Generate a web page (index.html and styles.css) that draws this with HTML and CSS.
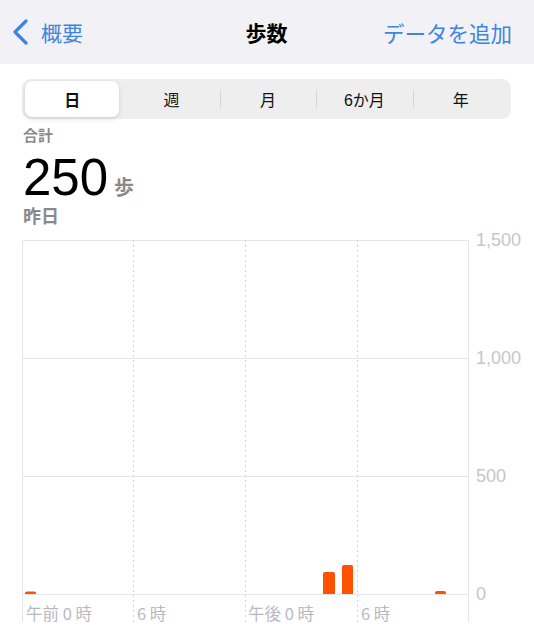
FILE: index.html
```
<!DOCTYPE html>
<html lang="ja">
<head>
    <meta charset="UTF-8">
    <title>歩数</title>
    <link rel="stylesheet" href="styles.css">
</head>
<body>
    <!-- ナビゲーションバー -->
    <div class="nav">
        <div class="nav-left">
            <svg class="chevron" width="18" height="26" viewBox="0 0 18 26">
                <polyline points="14,2 3,13 14,24" fill="none" stroke="#3c85e0" stroke-width="3.2" stroke-linecap="round" stroke-linejoin="round" />
            </svg>
            <span class="nav-link">概要</span>
        </div>
        <div class="nav-title">歩数</div>
        <div class="nav-right"><span class="nav-link">データを追加</span></div>
    </div>

    <!-- 期間の切り替え -->
    <div class="seg">
        <div class="seg-item current">日</div>
        <div class="seg-item">週</div>
        <div class="seg-item line">月</div>
        <div class="seg-item line">6か月</div>
        <div class="seg-item line">年</div>
    </div>

    <div class="summary">
        <div class="label">合計</div>
        <div class="total"><span class="num">250</span><span class="unit">歩</span></div>
        <div class="day">昨日</div>
    </div>

    <!-- グラフ -->
    <svg class="chart" width="534" height="410" viewBox="0 0 534 410">
        <g stroke="#e6e6ea" stroke-width="1">
            <line x1="22" y1="10.5" x2="468" y2="10.5" />
            <line x1="22" y1="128.5" x2="468" y2="128.5" />
            <line x1="22" y1="246.5" x2="468" y2="246.5" />
            <line x1="22" y1="364.5" x2="468" y2="364.5" />
            <line x1="22.5" y1="10" x2="22.5" y2="392" />
            <line x1="468.5" y1="10" x2="468.5" y2="392" />
        </g>
        <g stroke="#d2d2d7" stroke-width="1" stroke-dasharray="2,3">
            <line x1="133.5" y1="10" x2="133.5" y2="392" />
            <line x1="245.5" y1="10" x2="245.5" y2="392" />
            <line x1="357.5" y1="10" x2="357.5" y2="392" />
        </g>
        <g fill="#ff5200">
            <path d="M25,364 V363 Q25,361.5 27,361.5 H34 Q36,361.5 36,363 V364 Z" />
            <path d="M323,364 V344 Q323,342 325,342 H333 Q335,342 335,344 V364 Z" />
            <path d="M342,364 V337 Q342,335 344,335 H351 Q353,335 353,337 V364 Z" />
            <path d="M435,364 V362.5 Q435,361 437,361 H444 Q446,361 446,362.5 V364 Z" />
        </g>
        <g class="ylab">
            <text x="476" y="10">1,500</text>
            <text x="476" y="128">1,000</text>
            <text x="476" y="246">500</text>
            <text x="476" y="364">0</text>
        </g>
        <g class="xlab">
            <text x="26" y="383">午前 0 時</text>
            <text x="137" y="383">6 時</text>
            <text x="248" y="383">午後 0 時</text>
            <text x="361" y="383">6 時</text>
        </g>
    </svg>
</body>
</html>
```

FILE: styles.css
```
* {
    padding: 0;
    margin: 0;
    box-sizing: border-box;
}

body {
    width: 534px;
    background: #fff;
    font-family: "Liberation Sans", "Noto Sans CJK JP", sans-serif;
    color: #000;
}

.nav {
    height: 64px;
    background: #f2f2f6;
    display: grid;
    grid-template-columns: 1fr auto 1fr;
    align-items: center;
    padding: 0 22px 0 12px;
}

.nav-left {
    display: flex;
    align-items: center;
    gap: 11px;
}

.chevron {
    display: block;
}

.nav-link {
    font-family: "Noto Sans CJK JP", sans-serif;
    font-size: 21px;
    color: #3c85e0;
}

.nav-title {
    font-family: "Noto Sans CJK JP", sans-serif;
    font-size: 21px;
    font-weight: bold;
    margin-left: 9px;
}

.nav-right {
    display: flex;
    justify-content: flex-end;
}

.nav-right .nav-link {
    font-size: 21.5px;
}

/* 切り替えボタン */
.seg {
    margin: 15px 23px 0 22px;
    height: 40px;
    padding: 2px;
    background: #eeeeef;
    border-radius: 9px;
    display: flex;
    position: relative;
    z-index: 0;
}

.seg-item {
    flex: 1;
    display: flex;
    align-items: center;
    justify-content: center;
    font-size: 16px;
    color: #111;
    position: relative;
}

.seg-item.current {
    font-weight: bold;
    padding-right: 3px;
}

/* 白い札は枠より少し内側に */
.seg-item.current::before {
    content: "";
    position: absolute;
    top: 0;
    bottom: 0;
    left: 1px;
    right: 4px;
    z-index: -1;
    background: #fff;
    border-radius: 7px;
    box-shadow: 0 2px 5px rgba(0, 0, 0, 0.12), 0 0 1px rgba(0, 0, 0, 0.1);
}

.seg-item.line::before {
    content: "";
    position: absolute;
    left: 0;
    top: 9px;
    bottom: 9px;
    width: 1px;
    background: #d6d6d9;
}

.summary {
    padding: 0 23px;
}

.label {
    margin-top: 7px;
    font-size: 15px;
    line-height: 20px;
    font-weight: bold;
    color: #8a8a8e;
}

.total {
    margin-top: 6px;
    line-height: 51px;
    height: 51px;
    display: flex;
    align-items: baseline;
}

.num {
    font-size: 51px;
}

.unit {
    font-family: "Noto Sans CJK JP", sans-serif;
    font-size: 20px;
    font-weight: bold;
    color: #8a8a8e;
    margin-left: 6px;
}

.day {
    margin-top: 5px;
    font-size: 18px;
    line-height: 18px;
    font-weight: bold;
    color: #8a8a8e;
}

.chart {
    display: block;
    margin-top: 4px;
}

.ylab text {
    font-family: "Liberation Sans", sans-serif;
    font-size: 18px;
    fill: #c6c6ca;
    dominant-baseline: central;
}

.xlab text {
    font-family: "Noto Sans CJK JP", sans-serif;
    font-size: 16.5px;
    fill: #b9b9be;
    dominant-baseline: central;
}
```
